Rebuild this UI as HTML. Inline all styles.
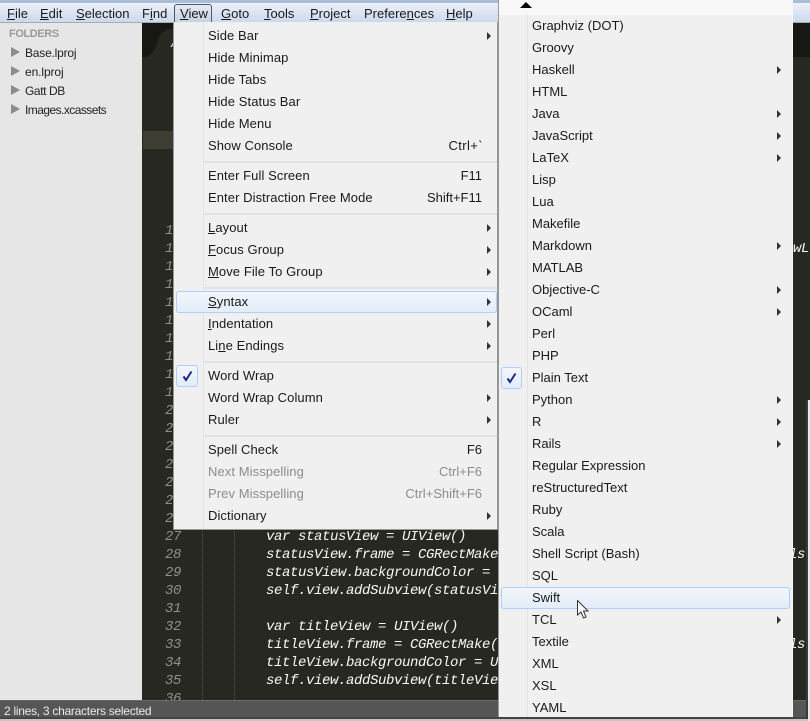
<!DOCTYPE html>
<html><head><meta charset="utf-8"><style>
html,body{margin:0;padding:0}
body{width:810px;height:721px;overflow:hidden;position:relative;background:#fff;font:13px/16px "Liberation Sans",sans-serif;color:#1a1a1a}
div{position:absolute}
.t{white-space:nowrap;height:16px;margin-top:1px}
.t u{text-decoration:underline}
.m{top:5px}
.l{left:208px;letter-spacing:.08px}
.r{left:532px}
.k{right:328px}
.d{color:#8d8d8d}
.a{width:0;height:0;border-left:4px solid #333;border-top:4px solid transparent;border-bottom:4px solid transparent}
.s{left:204px;width:293px;height:2px;background:#e2e2e2}
.n{left:165px;font:italic 14px/18px "Liberation Mono",monospace;letter-spacing:-.4px;color:#8f908a;white-space:pre;height:18px;margin-top:1px}
.c{left:266px;font:italic 14px/18px "Liberation Mono",monospace;letter-spacing:-.4px;color:#f8f8f2;white-space:pre;height:18px;margin-top:1px}
.f{left:25px;font-size:12px;color:#222;white-space:nowrap;margin-top:1px}
.v{width:0;height:0;left:11px;border-left:9px solid #8c8c8c;border-top:5px solid transparent;border-bottom:5px solid transparent}
.hl{border:1px solid #aecff7;border-radius:3px;background:linear-gradient(#f3f6fb,#e3ecf9);box-sizing:border-box}
.g{width:1px;border-left:1px dotted #555}
</style></head><body>

<div style="left:0;top:0;width:810px;height:3px;background:#a9bdd8"></div>
<div style="left:0;top:3px;width:810px;height:19px;background:linear-gradient(#edf1f9,#ccd8ed)"></div>
<div style="left:0;top:22px;width:810px;height:1px;background:#a8abb0"></div>

<div style="left:0;top:23px;width:142px;height:677px;background:#e6e6e6"></div>
<div style="left:142px;top:23px;width:668px;height:677px;background:#272822"></div>
<div style="left:142px;top:23px;width:668px;height:34px;background:#171713"></div>
<svg style="position:absolute;left:143px;top:23px" width="60" height="35"><path d="M0 34 C8 34 11 29 14 20 C17 10 21 6 30 6 L60 6 L60 35 L0 35Z" fill="#272822"/></svg>
<div style="left:171px;top:36px;font:italic 13px/14px 'Liberation Sans',sans-serif;color:#d8e4f0">A</div>
<div style="left:143px;top:131px;width:40px;height:18px;background:#3e3d32"></div>

<div class="t" style="left:9px;top:25px;font-size:11px;font-weight:bold;letter-spacing:-.4px;color:#9a9a9a">FOLDERS</div>
<div class="v" style="top:47px"></div><div class="t f" style="top:44px;letter-spacing:-.2px">Base.lproj</div>
<div class="v" style="top:66px"></div><div class="t f" style="top:63px;letter-spacing:-.1px">en.lproj</div>
<div class="v" style="top:85px"></div><div class="t f" style="top:82px;letter-spacing:-.4px">Gatt DB</div>
<div class="v" style="top:104px"></div><div class="t f" style="top:101px;letter-spacing:-.55px">Images.xcassets</div>

<div class="n" style="top:221px">1</div><div class="n" style="top:239px">1</div><div class="n" style="top:257px">1</div><div class="n" style="top:275px">1</div><div class="n" style="top:293px">1</div><div class="n" style="top:311px">1</div><div class="n" style="top:329px">1</div><div class="n" style="top:347px">1</div><div class="n" style="top:365px">1</div><div class="n" style="top:383px">1</div><div class="n" style="top:401px">2</div><div class="n" style="top:419px">2</div><div class="n" style="top:437px">2</div><div class="n" style="top:455px">2</div><div class="n" style="top:473px">2</div><div class="n" style="top:491px">2</div><div class="n" style="top:509px">2</div>
<div class="n" style="top:527px">27</div><div class="n" style="top:545px">28</div><div class="n" style="top:563px">29</div><div class="n" style="top:581px">30</div><div class="n" style="top:599px">31</div><div class="n" style="top:617px">32</div><div class="n" style="top:635px">33</div><div class="n" style="top:653px">34</div><div class="n" style="top:671px">35</div><div class="n" style="top:689px;height:10px;overflow:hidden">36</div>

<div class="g" style="left:202px;top:529px;height:171px"></div>
<div class="g" style="left:234px;top:529px;height:171px"></div>

<div class="c" style="top:527px">var statusView = UIView()</div>
<div class="c" style="top:545px">statusView.frame = CGRectMake</div>
<div class="c" style="top:563px">statusView.backgroundColor =</div>
<div class="c" style="top:581px">self.view.addSubview(statusVi</div>
<div class="c" style="top:617px">var titleView = UIView()</div>
<div class="c" style="top:635px">titleView.frame = CGRectMake(</div>
<div class="c" style="top:653px">titleView.backgroundColor = U</div>
<div class="c" style="top:671px">self.view.addSubview(titleVie</div>
<div class="c" style="left:793px;top:239px">wL</div>
<div class="c" style="left:789px;top:545px">ls)</div>
<div class="c" style="left:789px;top:635px">ls)</div>

<div style="left:0;top:700px;width:810px;height:17px;background:#565656;border-top:1px solid #6a6a6a;box-sizing:border-box"></div>
<div style="left:0;top:717px;width:810px;height:2px;background:#444"></div>
<div style="left:0;top:719px;width:810px;height:2px;background:#c4c4c4"></div>
<div class="t" style="left:4px;top:702px;font-size:12px;color:#e8e8e8;letter-spacing:-.27px">2 lines, 3 characters selected</div>

<div style="left:806px;top:400px;width:2px;height:319px;background:#3a3a3a"></div>
<div style="left:808px;top:400px;width:2px;height:321px;background:#e8e8e8"></div>

<div style="left:174px;top:4px;width:38px;height:18px;box-sizing:border-box;border:1px solid #4a5a6e;border-bottom:0;border-radius:3px 3px 0 0;background:linear-gradient(#e4eaf4,#c6d2e6)"></div>

<div class="t m" style="left:7px"><u>F</u>ile</div>
<div class="t m" style="left:40px"><u>E</u>dit</div>
<div class="t m" style="left:76px"><u>S</u>election</div>
<div class="t m" style="left:142px">F<u>i</u>nd</div>
<div class="t m" style="left:180px"><u>V</u>iew</div>
<div class="t m" style="left:221px"><u>G</u>oto</div>
<div class="t m" style="left:264px"><u>T</u>ools</div>
<div class="t m" style="left:310px"><u>P</u>roject</div>
<div class="t m" style="left:364px">Prefere<u>n</u>ces</div>
<div class="t m" style="left:446px"><u>H</u>elp</div>

<!-- View menu -->
<div style="left:173px;top:22px;width:325px;height:508px;box-sizing:border-box;background:#f0f0f0;border:1px solid #979797;border-top:0"></div>
<div style="left:203px;top:23px;width:1px;height:506px;background:#e2e3e3"></div>

<div class="t l" style="top:27px">Side Bar</div><div class="a" style="left:487px;top:32px"></div>
<div class="t l" style="top:49px">Hide Minimap</div>
<div class="t l" style="top:71px">Hide Tabs</div>
<div class="t l" style="top:93px">Hide Status Bar</div>
<div class="t l" style="top:115px">Hide Menu</div>
<div class="t l" style="top:137px">Show Console</div><div class="t k" style="top:137px;right:327px;letter-spacing:.4px">Ctrl+`</div>
<div class="s" style="top:161px"></div>
<div class="t l" style="top:167px">Enter Full Screen</div><div class="t k" style="top:167px">F11</div>
<div class="t l" style="top:189px">Enter Distraction Free Mode</div><div class="t k" style="top:189px">Shift+F11</div>
<div class="s" style="top:213px"></div>
<div class="t l" style="top:219px"><u>L</u>ayout</div><div class="a" style="left:487px;top:224px"></div>
<div class="t l" style="top:241px"><u>F</u>ocus Group</div><div class="a" style="left:487px;top:246px"></div>
<div class="t l" style="top:263px"><u>M</u>ove File To Group</div><div class="a" style="left:487px;top:268px"></div>
<div class="s" style="top:287px"></div>
<div class="hl" style="left:176px;top:291px;width:321px;height:22px"></div>
<div class="t l" style="top:293px"><u>S</u>yntax</div><div class="a" style="left:487px;top:298px"></div>
<div class="t l" style="top:315px"><u>I</u>ndentation</div><div class="a" style="left:487px;top:320px"></div>
<div class="t l" style="top:337px">Li<u>n</u>e Endings</div><div class="a" style="left:487px;top:342px"></div>
<div class="s" style="top:361px"></div>
<div class="hl" style="left:176px;top:365px;width:22px;height:22px"></div>
<svg style="position:absolute;left:182px;top:370px" width="11" height="12"><path d="M1.5 6.5 L4 10 L9.5 1.5" fill="none" stroke="#1a2a8c" stroke-width="2"/></svg>
<div class="t l" style="top:367px">Word Wrap</div>
<div class="t l" style="top:389px">Word Wrap Column</div><div class="a" style="left:487px;top:394px"></div>
<div class="t l" style="top:411px">Ruler</div><div class="a" style="left:487px;top:416px"></div>
<div class="s" style="top:435px"></div>
<div class="t l" style="top:441px">Spell Check</div><div class="t k" style="top:441px">F6</div>
<div class="t l d" style="top:463px">Next Misspelling</div><div class="t k d" style="top:463px">Ctrl+F6</div>
<div class="t l d" style="top:485px">Prev Misspelling</div><div class="t k d" style="top:485px">Ctrl+Shift+F6</div>
<div class="t l" style="top:507px">Dictionary</div><div class="a" style="left:487px;top:512px"></div>

<!-- Syntax menu -->
<div style="left:498px;top:0;width:295px;height:717px;background:#f0f0f0;border-left:1px solid #979797;box-sizing:border-box"></div>
<div style="left:499px;top:0;width:294px;height:15px;background:#f8f8f8"></div>
<div style="left:527px;top:15px;width:1px;height:702px;background:#e2e3e3"></div>
<div style="left:792px;top:0;width:1px;height:717px;background:#f8f8f8"></div>
<div style="left:520px;top:2px;width:0;height:0;border-left:6px solid transparent;border-right:6px solid transparent;border-bottom:6px solid #000"></div>

<div class="t r" style="top:17px">Graphviz (DOT)</div>
<div class="t r" style="top:39px">Groovy</div>
<div class="t r" style="top:61px">Haskell</div><div class="a" style="left:777px;top:66px"></div>
<div class="t r" style="top:83px">HTML</div>
<div class="t r" style="top:105px">Java</div><div class="a" style="left:777px;top:110px"></div>
<div class="t r" style="top:127px">JavaScript</div><div class="a" style="left:777px;top:132px"></div>
<div class="t r" style="top:149px">LaTeX</div><div class="a" style="left:777px;top:154px"></div>
<div class="t r" style="top:171px">Lisp</div>
<div class="t r" style="top:193px">Lua</div>
<div class="t r" style="top:215px">Makefile</div>
<div class="t r" style="top:237px">Markdown</div><div class="a" style="left:777px;top:242px"></div>
<div class="t r" style="top:259px">MATLAB</div>
<div class="t r" style="top:281px">Objective-C</div><div class="a" style="left:777px;top:286px"></div>
<div class="t r" style="top:303px">OCaml</div><div class="a" style="left:777px;top:308px"></div>
<div class="t r" style="top:325px">Perl</div>
<div class="t r" style="top:347px">PHP</div>
<div class="hl" style="left:501px;top:367px;width:21px;height:22px"></div>
<svg style="position:absolute;left:506px;top:372px" width="11" height="12"><path d="M1.5 6.5 L4 10 L9.5 1.5" fill="none" stroke="#1a2a8c" stroke-width="2"/></svg>
<div class="t r" style="top:369px">Plain Text</div>
<div class="t r" style="top:391px">Python</div><div class="a" style="left:777px;top:396px"></div>
<div class="t r" style="top:413px">R</div><div class="a" style="left:777px;top:418px"></div>
<div class="t r" style="top:435px">Rails</div><div class="a" style="left:777px;top:440px"></div>
<div class="t r" style="top:457px">Regular Expression</div>
<div class="t r" style="top:479px">reStructuredText</div>
<div class="t r" style="top:501px">Ruby</div>
<div class="t r" style="top:523px">Scala</div>
<div class="t r" style="top:545px">Shell Script (Bash)</div>
<div class="t r" style="top:567px">SQL</div>
<div class="hl" style="left:501px;top:587px;width:289px;height:22px"></div>
<div class="t r" style="top:589px">Swift</div>
<div class="t r" style="top:611px">TCL</div><div class="a" style="left:777px;top:616px"></div>
<div class="t r" style="top:633px">Textile</div>
<div class="t r" style="top:655px">XML</div>
<div class="t r" style="top:677px">XSL</div>
<div class="t r" style="top:699px">YAML</div>

<svg style="position:absolute;left:577px;top:600px" width="13" height="20"><path d="M0.5 0.5 L0.5 15 L4 12 L6.5 18 L9 17 L6.5 11 L11 11 Z" fill="#fff" stroke="#333" stroke-width="1"/></svg>

</body></html>
